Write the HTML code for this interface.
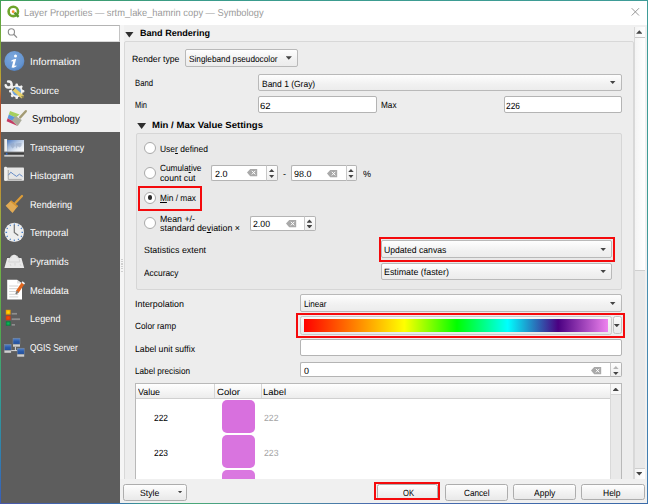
<!DOCTYPE html>
<html>
<head>
<meta charset="utf-8">
<title>Layer Properties</title>
<style>
*{box-sizing:border-box;margin:0;padding:0}
html,body{width:648px;height:504px;overflow:hidden}
body{position:relative;background:#f0f0f0;font-family:"Liberation Sans",sans-serif;font-size:9px;color:#000;text-rendering:geometricPrecision}
.a{position:absolute}
.tx{position:absolute;white-space:nowrap;transform-origin:0 0;display:block}
.tx u{text-decoration:underline;text-underline-offset:1px}
#frame{left:0;top:0;width:648px;height:504px;background:linear-gradient(180deg,#3f9f5a 0%,#5aa63e 3%,#8aa836 11%,#c8a030 16%,#b05030 20%,#a85030 24%,#c07030 30%,#c88a30 36%,#a0a840 42%,#80b040 48%,#6ab048 56%,#50a850 66%,#30a090 78%,#3080b0 90%,#3a5cb8 100%)}
#rb{left:646.8px;top:0;width:1.2px;height:504px;background:linear-gradient(180deg,#3f9c98 0%,#3f9c94 45%,#4a90b0 55%,#3f78b0 100%)}
#bb{left:0;top:502.6px;width:648px;height:1.4px;background:linear-gradient(90deg,#4a58a8 0%,#3a70b0 18%,#3a9a90 22%,#4aa878 30%,#4a90a0 45%,#4a6ab0 58%,#3a6aa8 100%)}
#tb{left:0;top:0;width:648px;height:1px;background:linear-gradient(90deg,#3f9f5a,#3a9c8c 30%,#3f9c98)}
#win{left:1px;top:1px;width:645.8px;height:501.6px;background:#f0f0f0}
#title{left:1px;top:1px;width:645.8px;height:24px;background:#fff}
#search{left:1px;top:25px;width:119px;height:17px;background:#fff;border:1px solid #c4c4c4;border-top-color:#b4b4b4;border-left:none;border-bottom-color:#d8d8d8}
#side{left:1px;top:41.5px;width:119px;height:461.1px;background:#5d5d5d}
#sel{left:1px;top:103.7px;width:119px;height:28.5px;background:#f0f0f0}
.inp{position:absolute;background:#fff;border:1px solid #b4b4b4;border-radius:2px}
.cmb{position:absolute;background:linear-gradient(#fefefe,#f1f1f1 60%,#ececec);border:1px solid #b9b9b9;border-radius:2px}
.arr{position:absolute;width:6.4px;height:3.6px;margin-left:-0.3px;background:#444;clip-path:polygon(0 0,100% 0,50% 100%)}
.arru{position:absolute;width:6.4px;height:3.6px;margin-left:-0.3px;background:#444;clip-path:polygon(0 100%,100% 100%,50% 0)}
.sp{width:5.9px !important;height:3.3px !important}
.grp{position:absolute;border:1px solid #d6d6d6;border-radius:2px}
.radio{position:absolute;width:12px;height:12px;border-radius:50%;background:#fff;border:1px solid #a9a9a9}
.dot{position:absolute;width:4.8px;height:4.8px;border-radius:50%;background:#2a2a2a}
.red{position:absolute;border:2px solid #f40a0c}
.btn{position:absolute;background:linear-gradient(#fefefe,#f3f3f3 50%,#e9e9e9);border:1px solid #adadad;border-radius:2.5px}
.tri{position:absolute;width:8.9px;height:6px;background:#2e2e2e;clip-path:polygon(0 0,100% 0,50% 100%)}
.spn{position:absolute;border:1px solid #b4b4b4;border-left:1px solid #c8c8c8;border-radius:0 2px 2px 0;background:linear-gradient(#fefefe,#eee)}
.clr{position:absolute}
</style>
</head>
<body>
<div class="a" id="frame"></div>
<div class="a" id="rb"></div>
<div class="a" id="bb"></div>
<div class="a" id="tb"></div>
<div class="a" id="win"></div>
<div class="a" id="title"></div>
<!--ICON_TITLE-->
<div class="a" id="search"></div>
<div class="a" id="side"></div>
<div class="a" id="sel"></div>
<svg class="a" style="left:0;top:0" width="648" height="504" viewBox="0 0 648 504">
<defs>
<radialGradient id="gi" cx="0.4" cy="0.3" r="0.8"><stop offset="0" stop-color="#7aa6dc"/><stop offset="0.7" stop-color="#6595d0"/><stop offset="1" stop-color="#4a78b8"/></radialGradient>
<linearGradient id="gt" x1="0" y1="0" x2="1" y2="1"><stop offset="0" stop-color="#4a78c0"/><stop offset="0.35" stop-color="#a4bbdd"/><stop offset="0.7" stop-color="#e6ecf5"/><stop offset="1" stop-color="#ffffff"/></linearGradient>
<linearGradient id="gs" x1="0" y1="0" x2="0" y2="1"><stop offset="0" stop-color="#5a88cc"/><stop offset="0.5" stop-color="#2c5cab"/><stop offset="1" stop-color="#24509c"/></linearGradient>
<radialGradient id="gy"><stop offset="0" stop-color="#ffe600"/><stop offset="1" stop-color="#f2a200"/></radialGradient>
<radialGradient id="go"><stop offset="0" stop-color="#ff4a00"/><stop offset="1" stop-color="#d23c10"/></radialGradient>
<radialGradient id="gg"><stop offset="0" stop-color="#00c858"/><stop offset="1" stop-color="#0f7c40"/></radialGradient>
</defs>
<!-- title icon -->
<circle cx="13.3" cy="11.4" r="4.7" fill="none" stroke="#6ea52b" stroke-width="2.6"/>
<path d="M14.4 12.6 L18.6 16.9" stroke="#5a962a" stroke-width="2.4" fill="none"/>
<circle cx="13.2" cy="11.7" r="1.4" fill="#f28c28"/>
<!-- close -->
<path d="M631.7 8.2 L639 15.5 M639 8.2 L631.7 15.5" stroke="#8c8c8c" stroke-width="0.9" fill="none"/>
<!-- search -->
<circle cx="11.4" cy="31.9" r="3.1" fill="none" stroke="#8c8c8c" stroke-width="1.1"/>
<path d="M13.7 34.3 L17 37.6" stroke="#8c8c8c" stroke-width="1.3"/>
<!-- information -->
<circle cx="14.4" cy="61" r="10" fill="url(#gi)"/>
<circle cx="15.5" cy="56" r="1.5" fill="#fff"/>
<path d="M11.4 60.6 L13.2 59.4 L16.2 58.8 L14.4 65.8 L16.6 65.4 L16.2 66.6 L13.6 67.8 L11.6 67.4 L13.2 61.2 L11.2 61.6 Z" fill="#fff"/>
<!-- source -->
<g>
<circle cx="16.7" cy="91.3" r="6.1" fill="#f2f2f2"/>
<g fill="#f2f2f2">
<rect x="15.4" y="83.6" width="2.6" height="15.4" rx="1"/>
<rect x="15.4" y="83.6" width="2.6" height="15.4" rx="1" transform="rotate(45 16.7 91.3)"/>
<rect x="15.4" y="83.6" width="2.6" height="15.4" rx="1" transform="rotate(90 16.7 91.3)"/>
<rect x="15.4" y="83.6" width="2.6" height="15.4" rx="1" transform="rotate(135 16.7 91.3)"/>
</g>
<circle cx="16.7" cy="91.3" r="4.3" fill="#6fa3dc"/>
<path d="M13 88.6 L22.8 97.2" stroke="#e6cf68" stroke-width="3.6" stroke-linecap="butt"/>
<path d="M12.6 88.2 L13.9 89.4" stroke="#333" stroke-width="3.4"/>
<path d="M21.6 96.2 L23.4 97.8" stroke="#8c8250" stroke-width="1.6"/>
<path d="M13.2 88.8 L10.8 86.6" stroke="#e6e6e6" stroke-width="2.8"/>
<path d="M8.1 81.6 A3 3 0 1 1 5.7 85.3" stroke="#f0f0f0" stroke-width="2.5" fill="none" stroke-linecap="round"/>
</g>
<!-- symbology -->
<g>
<polygon points="10,111 19.6,114.6 15.6,117.6 8.8,114.6" fill="#a6cf5e"/>
<polygon points="8.8,114.6 15.6,117.6 12.6,121 7.6,118.2" fill="#5a96dc"/>
<polygon points="7.6,118.2 12.6,121 17.6,126 6.6,121.2" fill="#c63a62"/>
<polygon points="15.6,116 21.8,120 17.8,126 12,120.7" fill="#a9aa98"/>
<path d="M20.2 117.4 L25.8 111.2" stroke="#a39b74" stroke-width="2.4" stroke-linecap="round"/>
</g>
<!-- transparency -->
<g>
<rect x="4.3" y="139" width="2.8" height="12.6" fill="#eeeeee"/>
<rect x="7.1" y="140" width="16.9" height="11.7" fill="url(#gt)"/>
<path d="M10 144 L14 143 L15 146 L12.6 148.4 L11 146.4 Z M15.6 143.4 L21.6 142.8 L21.4 146 L19.6 147.6 L17.6 146 L16.6 148.6 L15.4 146 Z" fill="#8fa3bf" opacity="0.55"/>
<rect x="4.3" y="153" width="19.7" height="0.9" fill="#3a3a3a"/>
<rect x="5.8" y="152.8" width="1.7" height="2.5" fill="#3a66b0"/>
<rect x="4.3" y="155" width="19.7" height="1.7" fill="#c9c9c9"/>
</g>
<!-- histogram -->
<g>
<rect x="4.3" y="167.5" width="19.7" height="13.3" rx="0.8" fill="#e6e6e6"/>
<rect x="4.3" y="166.8" width="2.6" height="14" rx="0.8" fill="#efefef"/>
<path d="M8.3 170 V179.4 H21.7" stroke="#9a9a9a" stroke-width="0.8" fill="none"/>
<path d="M8.4 175.2 L10.8 172.2 L13.6 174.4 L16.6 176.4 L19.4 174.2 L22.5 176.4" stroke="#5680c2" stroke-width="0.9" fill="none"/>
</g>
<!-- rendering -->
<g>
<polygon points="11.1,200.5 18,206 12.5,213 5.6,205.8" fill="#e2ab55"/>
<polygon points="11.1,200.5 18,206 17.1,207.2 10.2,201.6" fill="#d4922e"/>
<path d="M15.5 202.8 L22 196" stroke="#dc9c38" stroke-width="2.3" stroke-linecap="round"/>
</g>
<!-- temporal -->
<g>
<circle cx="14.3" cy="232.4" r="9.7" fill="#eeeeee"/>
<g stroke="#4a80c8" stroke-width="1.1">
<path d="M14.3 223.6 v1.6 M14.3 239.6 v1.6 M5.5 232.4 h1.6 M21.5 232.4 h1.6"/>
<path d="M18.7 224.8 l-0.7 1.2 M22 228 l-1.2 0.7 M22 236.8 l-1.2 -0.7 M18.7 240 l-0.7 -1.2 M9.9 240 l0.7 -1.2 M6.6 236.8 l1.2 -0.7 M6.6 228 l1.2 0.7 M9.9 224.8 l0.7 1.2"/>
</g>
<path d="M14.3 225 V232.4 L18.3 235.4" stroke="#707070" stroke-width="1.2" fill="none"/>
</g>
<!-- pyramids -->
<g>
<polygon points="4.4,268 7.2,258 9.8,258 11.6,255.6 14.2,254.4 16.8,255.6 18.9,258 21.4,258 24.2,268" fill="#e9e9e9"/>
<path d="M9.8 258 L8.6 262 H19.8 L18.9 258 M11.6 255.6 L10.8 258 M16.8 255.6 L17.6 258 M10 264 l1 2 M15 263 l0 2.6 M20 264 l1 2" stroke="#cfcfcf" stroke-width="0.7" fill="none"/>
<path d="M7.2 257.6 L11.6 255.2 L14.2 254 L16.8 255.2 L21.4 257.6" stroke="#444" stroke-width="0.6" stroke-dasharray="1 1" fill="none"/>
</g>
<!-- metadata -->
<g>
<polygon points="7.2,279.8 17,279.8 22,283.6 22,299.6 7.2,299.6" fill="#ffffff"/>
<polygon points="17,279.8 22,283.6 17,283.6" fill="#e2e2e2"/>
<path d="M9.2 286 H18.3 M9.2 288.7 H18.3 M9.2 291.5 H18.3 M9.2 294.3 H18.3 M9.2 296.9 H18.3" stroke="#d2d2d2" stroke-width="1"/>
<path d="M17.2 292 L23 283.4" stroke="#e2661c" stroke-width="3.2"/>
<path d="M16 294 L17.8 291.2" stroke="#7c7c7c" stroke-width="2"/>
<path d="M22.8 283.6 L23.8 282.2" stroke="#f4f4f4" stroke-width="3.2"/>
</g>
<!-- legend -->
<g>
<rect x="5.8" y="309.8" width="4.8" height="4.8" fill="url(#gy)"/>
<rect x="5.8" y="315.6" width="4.8" height="4.6" fill="url(#go)"/>
<rect x="5.8" y="321.2" width="4.8" height="4.6" fill="url(#gg)"/>
<rect x="11.7" y="312.9" width="5.3" height="1.7" fill="#8e8e8e"/>
<rect x="11.7" y="318.3" width="8.3" height="1.8" fill="#8e8e8e"/>
<rect x="11.7" y="324" width="3.3" height="1.7" fill="#8e8e8e"/>
</g>
<!-- server -->
<g>
<path d="M15.4 346.7 V350.6 M11.1 350.6 H17.2" stroke="#e8e8e8" stroke-width="0.9" fill="none"/>
<rect x="13" y="338.2" width="7" height="6" fill="url(#gs)" stroke="#7f8a9a" stroke-width="0.5"/>
<rect x="13" y="344.4" width="7" height="2.3" fill="#cfcfcf"/>
<rect x="4.4" y="344.3" width="6.7" height="6" fill="url(#gs)" stroke="#7f8a9a" stroke-width="0.5"/>
<rect x="4.4" y="350.5" width="6.7" height="2.3" fill="#cfcfcf"/>
<rect x="17.2" y="348.2" width="7" height="6" fill="url(#gs)" stroke="#7f8a9a" stroke-width="0.5"/>
<rect x="17.2" y="354.4" width="7" height="2.3" fill="#cfcfcf"/>
</g>
</svg>


<!-- scroll area content -->
<div class="grp" style="left:124px;top:41px;width:510px;height:450px;background:#ededed;border-color:#d8d8d8"></div>
<div class="tri" style="left:124.9px;top:31.6px"></div>
<div class="cmb" style="left:185px;top:49.3px;width:113px;height:17.4px"></div><div class="arr" style="left:286px;top:56.2px;width:6.2px;height:3.5px"></div>
<div class="cmb" style="left:258px;top:74px;width:364px;height:16.9px"></div><div class="arr" style="left:609.8px;top:80.5px"></div>
<div class="inp" style="left:258px;top:96.2px;width:118.5px;height:17.2px"></div>
<div class="inp" style="left:503.5px;top:96.2px;width:118.5px;height:17.2px"></div>
<div class="tri" style="left:137.2px;top:122.9px"></div>
<div class="grp" style="left:136px;top:132.5px;width:486px;height:157px;background:#e9e9e9;border-color:#d6d6d6"></div>
<div class="radio" style="left:144px;top:141.5px"></div>
<div class="radio" style="left:144px;top:166.5px"></div>
<div class="radio" style="left:144px;top:191.5px"></div><div class="dot" style="left:147.6px;top:195.4px"></div>
<div class="radio" style="left:144px;top:216.5px"></div>
<div class="red" style="left:138px;top:186px;width:64px;height:25px"></div>
<!-- spin 2.0 -->
<div class="inp" style="left:211px;top:165px;width:56px;height:15.5px;border-radius:2px 0 0 2px;border-right:none"></div><div class="spn" style="left:266px;top:165px;width:11.5px;height:15.5px"></div>
<div class="arru sp" style="left:269px;top:168.9px"></div><div class="arr sp" style="left:269px;top:174.6px"></div>
<svg class="a" style="left:246.7px;top:169.4px" width="11" height="8" viewBox="0 0 11 8"><path d="M0 3.6 L3.2 0 H10.2 V7.2 H3.2 Z" fill="#a9a9a9"/><path d="M4.9 1.8 L8.3 5.4 M8.3 1.8 L4.9 5.4" stroke="#fff" stroke-width="1" fill="none"/></svg>
<div class="inp" style="left:291px;top:165px;width:55px;height:15.5px;border-radius:2px 0 0 2px;border-right:none"></div><div class="spn" style="left:345.5px;top:165px;width:11.5px;height:15.5px"></div>
<div class="arru sp" style="left:348.3px;top:168.9px"></div><div class="arr sp" style="left:348.3px;top:174.6px"></div>
<svg class="a" style="left:327px;top:169.5px" width="11" height="8" viewBox="0 0 11 8"><path d="M0 3.6 L3.2 0 H10.2 V7.2 H3.2 Z" fill="#a9a9a9"/><path d="M4.9 1.8 L8.3 5.4 M8.3 1.8 L4.9 5.4" stroke="#fff" stroke-width="1" fill="none"/></svg>
<div class="inp" style="left:249.5px;top:215.5px;width:55px;height:15px;border-radius:2px 0 0 2px;border-right:none"></div><div class="spn" style="left:304px;top:215.5px;width:11.5px;height:15px"></div>
<div class="arru sp" style="left:306.8px;top:219.4px"></div><div class="arr sp" style="left:306.8px;top:225.1px"></div>
<svg class="a" style="left:285.5px;top:220px" width="11" height="8" viewBox="0 0 11 8"><path d="M0 3.6 L3.2 0 H10.2 V7.2 H3.2 Z" fill="#a9a9a9"/><path d="M4.9 1.8 L8.3 5.4 M8.3 1.8 L4.9 5.4" stroke="#fff" stroke-width="1" fill="none"/></svg>
<div class="red" style="left:379px;top:237px;width:236px;height:24.5px"></div>
<div class="cmb" style="left:381px;top:240px;width:230.5px;height:18px"></div><div class="arr" style="left:600.3px;top:247.5px"></div>
<div class="cmb" style="left:381px;top:263.2px;width:230.5px;height:16.6px"></div><div class="arr" style="left:600.3px;top:269.5px"></div>
<div class="cmb" style="left:300px;top:294.2px;width:322px;height:17.4px"></div><div class="arr" style="left:609.8px;top:301.5px"></div>
<!-- color ramp -->
<div class="red" style="left:296px;top:313px;width:329px;height:25px"></div>
<div class="btn" style="left:300px;top:316px;width:312.4px;height:18.8px;border-color:#c9c9c9;background:linear-gradient(#f7f7f7,#e8e8e8)"></div>
<div class="btn" style="left:612.7px;top:316.4px;width:9px;height:17.6px;border-color:#c2c2c2;background:linear-gradient(#fbfbfb,#e9e9e9)"></div>
<div class="a" style="left:304px;top:319px;width:304.2px;height:13px;background:linear-gradient(90deg,#ff0000 0%,#ff7f00 16.5%,#ffff00 33%,#00ff00 50.3%,#00ffff 67%,#4b0082 83.6%,#ee82ee 100%)"></div>
<div class="arr" style="left:613.9px;top:323.7px;width:6.4px;height:3.5px;background:#444"></div>
<div class="inp" style="left:300px;top:339.1px;width:322px;height:16.9px"></div>
<div class="inp" style="left:300px;top:362.3px;width:311px;height:15.1px;border-radius:2px 0 0 2px;border-right:none"></div><div class="spn" style="left:610.3px;top:362.3px;width:11.5px;height:15.1px"></div>
<div class="arru sp" style="left:613.2px;top:366px;background:#b4b4b4"></div><div class="arr sp" style="left:613.2px;top:371.7px"></div>
<svg class="a" style="left:591px;top:367px" width="11" height="8" viewBox="0 0 11 8"><path d="M0 3.6 L3.2 0 H10.2 V7.2 H3.2 Z" fill="#a9a9a9"/><path d="M4.9 1.8 L8.3 5.4 M8.3 1.8 L4.9 5.4" stroke="#fff" stroke-width="1" fill="none"/></svg>
<!-- table -->
<div class="a" style="left:135px;top:383px;width:487px;height:100px;background:#fff;border:1px solid #b9b9b9"></div>
<div class="a" style="left:136px;top:384px;width:474.3px;height:14.5px;background:linear-gradient(#fff,#f4f4f4 60%,#ececec);border-bottom:1px solid #d0d0d0"></div>
<div class="a" style="left:214.3px;top:384px;width:1px;height:14px;background:#d6d6d6"></div>
<div class="a" style="left:261.3px;top:384px;width:1px;height:14px;background:#d6d6d6"></div>
<div class="a" style="left:610.3px;top:384px;width:10.8px;height:98px;background:#e9e9e9;border-left:1px solid #d9d9d9"></div>
<div class="a" style="left:611.3px;top:384px;width:9.8px;height:11px;background:#f8f8f8;border-bottom:1px solid #d6d6d6"></div>
<div class="arru" style="left:612.8px;top:387.5px"></div>
<div class="a" style="left:221.5px;top:400px;width:33.5px;height:33px;border-radius:5px;background:#d870de"></div>
<div class="a" style="left:221.5px;top:435px;width:33.5px;height:33px;border-radius:5px;background:#d974df"></div>
<div class="a" style="left:221.5px;top:470px;width:33.5px;height:33px;border-radius:5px;background:#da78e0"></div>
<!-- cover below scroll area -->
<div class="a" style="left:120px;top:479.3px;width:527px;height:23.7px;background:#f0f0f0"></div>
<!-- splitter + left strip -->
<div class="a" style="left:120px;top:25px;width:4px;height:454.3px;background:#f5f5f5"></div>
<div class="a" style="left:121.2px;top:258.6px;width:1.4px;height:1.2px;background:#d0d0d0"></div><div class="a" style="left:121.2px;top:261px;width:1.4px;height:1.2px;background:#d0d0d0"></div><div class="a" style="left:121.2px;top:263.4px;width:1.4px;height:1.2px;background:#d0d0d0"></div><div class="a" style="left:121.2px;top:266px;width:1.4px;height:1.2px;background:#d0d0d0"></div><div class="a" style="left:121.2px;top:268.3px;width:1.4px;height:1.2px;background:#d0d0d0"></div><div class="a" style="left:121.2px;top:270.7px;width:1.4px;height:1.2px;background:#d0d0d0"></div>
<!-- main scrollbar -->
<div class="a" style="left:634px;top:26.5px;width:11.3px;height:452.8px;background:#e9e9e9;border-left:1px solid #d9d9d9"></div>
<div class="a" style="left:635px;top:26.5px;width:10.3px;height:244.5px;background:linear-gradient(90deg,#f4f4f4,#ffffff);border-bottom:1px solid #cfcfcf"></div>
<div class="a" style="left:635px;top:37px;width:10.3px;height:1px;background:#c9c9c9"></div>
<div class="arru" style="left:636.4px;top:30.2px"></div>
<div class="a" style="left:635px;top:468px;width:10.3px;height:11.3px;background:linear-gradient(90deg,#f4f4f4,#ffffff);border-top:1px solid #cfcfcf"></div>
<div class="arr" style="left:636.4px;top:472px"></div>
<!-- bottom buttons -->
<div class="btn" style="left:123px;top:484.3px;width:63.7px;height:16.4px"></div><div class="arr" style="left:178px;top:490.7px;width:4.7px;height:2.5px"></div>
<div class="btn" style="left:376.5px;top:484.3px;width:61.5px;height:16.2px"></div>
<div class="red" style="left:374.2px;top:482.2px;width:66px;height:18.2px"></div>
<div class="btn" style="left:445.3px;top:484.3px;width:62.4px;height:16.4px"></div>
<div class="btn" style="left:513px;top:484.3px;width:63.4px;height:16.2px"></div>
<div class="btn" style="left:581px;top:484.3px;width:63.9px;height:16.2px"></div>
<span class="tx" style="left:24.0px;top:9.0px;font-size:10px;line-height:10px;color:#9a9a9a;transform:scaleX(0.931);">Layer Properties — srtm_lake_hamrin copy — Symbology</span>
<span class="tx" style="left:29.5px;top:58.0px;font-size:10px;line-height:10px;color:#fff;transform:scaleX(0.999);">Information</span>
<span class="tx" style="left:29.5px;top:87.0px;font-size:10px;line-height:10px;color:#fff;transform:scaleX(0.915);">Source</span>
<span class="tx" style="left:31.7px;top:115.0px;font-size:10px;line-height:10px;color:#000;transform:scaleX(0.966);">Symbology</span>
<span class="tx" style="left:30.0px;top:144.0px;font-size:10px;line-height:10px;color:#fff;transform:scaleX(0.892);">Transparency</span>
<span class="tx" style="left:30.0px;top:172.0px;font-size:10px;line-height:10px;color:#fff;transform:scaleX(0.961);">Histogram</span>
<span class="tx" style="left:30.0px;top:201.0px;font-size:10px;line-height:10px;color:#fff;transform:scaleX(0.914);">Rendering</span>
<span class="tx" style="left:30.0px;top:229.0px;font-size:10px;line-height:10px;color:#fff;transform:scaleX(0.929);">Temporal</span>
<span class="tx" style="left:30.0px;top:258.0px;font-size:10px;line-height:10px;color:#fff;transform:scaleX(0.924);">Pyramids</span>
<span class="tx" style="left:30.0px;top:287.0px;font-size:10px;line-height:10px;color:#fff;transform:scaleX(0.930);">Metadata</span>
<span class="tx" style="left:30.0px;top:315.0px;font-size:10px;line-height:10px;color:#fff;transform:scaleX(0.914);">Legend</span>
<span class="tx" style="left:30.0px;top:344.0px;font-size:10px;line-height:10px;color:#fff;transform:scaleX(0.835);">QGIS Server</span>
<span class="tx" style="left:140.0px;top:29.0px;font-size:9px;line-height:9px;color:#000;transform:scaleX(1.007);font-weight:bold;">Band Rendering</span>
<span class="tx" style="left:132.0px;top:55.0px;font-size:9px;line-height:9px;color:#000;transform:scaleX(0.967);">Render type</span>
<span class="tx" style="left:189.0px;top:55.0px;font-size:9px;line-height:9px;color:#000;transform:scaleX(0.916);">Singleband pseudocolor</span>
<span class="tx" style="left:135.0px;top:79.0px;font-size:9px;line-height:9px;color:#000;transform:scaleX(0.856);">Band</span>
<span class="tx" style="left:261.6px;top:80.0px;font-size:9px;line-height:9px;color:#000;transform:scaleX(0.941);">Band 1 (Gray)</span>
<span class="tx" style="left:135.0px;top:101.0px;font-size:9px;line-height:9px;color:#000;transform:scaleX(0.827);">Min</span>
<span class="tx" style="left:259.8px;top:102.0px;font-size:9px;line-height:9px;color:#000;transform:scaleX(1.058);">62</span>
<span class="tx" style="left:380.8px;top:101.0px;font-size:9px;line-height:9px;color:#000;transform:scaleX(0.911);">Max</span>
<span class="tx" style="left:505.5px;top:102.0px;font-size:9px;line-height:9px;color:#000;transform:scaleX(0.931);">226</span>
<span class="tx" style="left:152.0px;top:121.0px;font-size:9px;line-height:9px;color:#000;transform:scaleX(1.062);font-weight:bold;">Min / Max Value Settings</span>
<span class="tx" style="left:160.0px;top:145.0px;font-size:9px;line-height:9px;color:#000;transform:scaleX(0.940);">Use<u>r</u> defined</span>
<span class="tx" style="left:160.0px;top:164.0px;font-size:9px;line-height:9px;color:#000;transform:scaleX(0.921);">Cumula<u>t</u>ive</span>
<span class="tx" style="left:160.0px;top:174.0px;font-size:9px;line-height:9px;color:#000;transform:scaleX(0.972);">count cut</span>
<span class="tx" style="left:215.0px;top:170.0px;font-size:9px;line-height:9px;color:#000;transform:scaleX(0.999);">2.0</span>
<span class="tx" style="left:283.0px;top:170.0px;font-size:9px;line-height:9px;color:#000;transform:scaleX(1.000);">-</span>
<span class="tx" style="left:294.0px;top:170.0px;font-size:9px;line-height:9px;color:#000;transform:scaleX(0.998);">98.0</span>
<span class="tx" style="left:362.5px;top:170.0px;font-size:9px;line-height:9px;color:#000;transform:scaleX(0.998);">%</span>
<span class="tx" style="left:160.0px;top:194.0px;font-size:9px;line-height:9px;color:#000;transform:scaleX(0.923);"><u>M</u>in / max</span>
<span class="tx" style="left:160.0px;top:215.0px;font-size:9px;line-height:9px;color:#000;transform:scaleX(0.978);">Mean +/-</span>
<span class="tx" style="left:160.0px;top:224.0px;font-size:9px;line-height:9px;color:#000;transform:scaleX(0.984);">standard de<u>v</u>iation ×</span>
<span class="tx" style="left:253.0px;top:220.0px;font-size:9px;line-height:9px;color:#000;transform:scaleX(0.970);">2.00</span>
<span class="tx" style="left:144.0px;top:246.0px;font-size:9px;line-height:9px;color:#000;transform:scaleX(0.984);">Statistics extent</span>
<span class="tx" style="left:384.2px;top:246.0px;font-size:9px;line-height:9px;color:#000;transform:scaleX(0.958);">Updated canvas</span>
<span class="tx" style="left:144.0px;top:269.0px;font-size:9px;line-height:9px;color:#000;transform:scaleX(0.932);">Accuracy</span>
<span class="tx" style="left:384.2px;top:268.0px;font-size:9px;line-height:9px;color:#000;transform:scaleX(0.982);">Estimate (faster)</span>
<span class="tx" style="left:135.0px;top:300.0px;font-size:9px;line-height:9px;color:#000;transform:scaleX(0.989);">Interpolation</span>
<span class="tx" style="left:304.0px;top:300.0px;font-size:9px;line-height:9px;color:#000;transform:scaleX(0.899);">Linear</span>
<span class="tx" style="left:135.0px;top:322.0px;font-size:9px;line-height:9px;color:#000;transform:scaleX(0.921);">Color ramp</span>
<span class="tx" style="left:135.0px;top:345.0px;font-size:9px;line-height:9px;color:#000;transform:scaleX(0.962);">Label unit suffix</span>
<span class="tx" style="left:135.0px;top:367.0px;font-size:9px;line-height:9px;color:#000;transform:scaleX(0.908);">Label precision</span>
<span class="tx" style="left:304.0px;top:367.0px;font-size:9px;line-height:9px;color:#000;transform:scaleX(0.997);">0</span>
<span class="tx" style="left:137.5px;top:388.0px;font-size:9px;line-height:9px;color:#000;transform:scaleX(0.984);">Value</span>
<span class="tx" style="left:217.0px;top:388.0px;font-size:9px;line-height:9px;color:#000;transform:scaleX(1.069);">Color</span>
<span class="tx" style="left:262.8px;top:388.0px;font-size:9px;line-height:9px;color:#000;transform:scaleX(1.044);">Label</span>
<span class="tx" style="left:154.0px;top:414.0px;font-size:9px;line-height:9px;color:#000;transform:scaleX(0.931);">222</span>
<span class="tx" style="left:263.8px;top:414.0px;font-size:9px;line-height:9px;color:#a4a4a4;transform:scaleX(0.965);">222</span>
<span class="tx" style="left:154.0px;top:449.0px;font-size:9px;line-height:9px;color:#000;transform:scaleX(0.931);">223</span>
<span class="tx" style="left:263.8px;top:449.0px;font-size:9px;line-height:9px;color:#a4a4a4;transform:scaleX(0.965);">223</span>
<span class="tx" style="left:139.7px;top:489.0px;font-size:9px;line-height:9px;color:#000;transform:scaleX(0.964);">Style</span>
<span class="tx" style="left:402.5px;top:489.0px;font-size:9px;line-height:9px;color:#000;transform:scaleX(0.845);">OK</span>
<span class="tx" style="left:463.5px;top:489.0px;font-size:9px;line-height:9px;color:#000;transform:scaleX(0.910);">Cancel</span>
<span class="tx" style="left:533.7px;top:489.0px;font-size:9px;line-height:9px;color:#000;transform:scaleX(0.946);">Apply</span>
<span class="tx" style="left:603.0px;top:489.0px;font-size:9px;line-height:9px;color:#000;transform:scaleX(0.945);">Help</span>
</body>
</html>
